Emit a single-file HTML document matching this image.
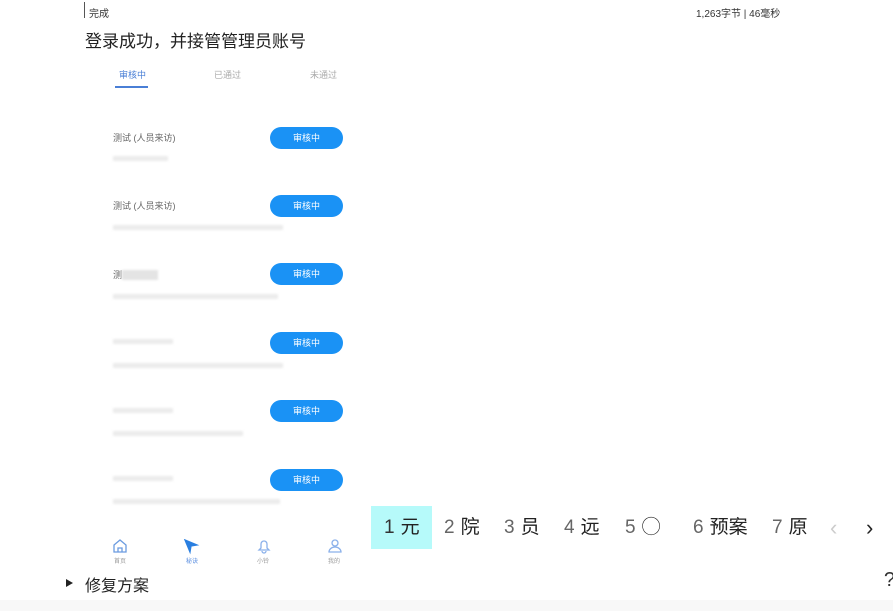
<!DOCTYPE html>
<html><head><meta charset="utf-8"><style>
body{margin:0;width:893px;height:611px;background:#fff;position:relative;overflow:hidden;font-family:"Liberation Sans","Noto Sans CJK SC",sans-serif;color:#333}
.a{position:absolute;white-space:nowrap}
.btn{position:absolute;left:270px;width:73px;height:22px;border-radius:11px;background:#1a92f5;color:#fff;font-size:9px;text-align:center;line-height:22px}
.t{position:absolute;left:113px;font-size:9px;color:#666}
.b{position:absolute;height:5px;background:#ececec;filter:blur(1px)}
.n{position:absolute;top:508px;height:40px;line-height:40px;font-size:19px;color:#222}
.n i{font-style:normal;color:#666;margin-right:6px}
</style></head><body>
<div class="a" style="left:84px;top:2px;width:1px;height:16px;background:#555"></div>
<div class="a" style="left:89px;top:5px;font-size:10px">完成</div>
<div class="a" style="left:696px;top:5px;font-size:10px">1,263字节 | 46毫秒</div>
<div class="a" style="left:85px;top:27px;font-size:17px;color:#222">登录成功，并接管管理员账号</div>
<div class="a" style="left:119px;top:68px;font-size:9px;color:#4a7fd6">审核中</div>
<div class="a" style="left:115px;top:86px;width:33px;height:2px;background:#4a7fd6"></div>
<div class="a" style="left:214px;top:68px;font-size:9px;color:#aaa">已通过</div>
<div class="a" style="left:310px;top:68px;font-size:9px;color:#aaa">未通过</div>

<div class="t" style="top:131px">测试 (人员来访)</div><div class="btn" style="top:127px">审核中</div>
<div class="b" style="left:113px;top:156px;width:55px"></div>
<div class="t" style="top:199px">测试 (人员来访)</div><div class="btn" style="top:195px">审核中</div>
<div class="b" style="left:113px;top:225px;width:170px"></div>
<div class="t" style="top:268px">测<span style="background:#e4e4e4;color:transparent;filter:blur(1px)">试试试试</span></div><div class="btn" style="top:263px">审核中</div>
<div class="b" style="left:113px;top:294px;width:165px"></div>
<div class="b" style="left:113px;top:339px;width:60px"></div><div class="btn" style="top:332px">审核中</div>
<div class="b" style="left:113px;top:363px;width:170px"></div>
<div class="b" style="left:113px;top:408px;width:60px"></div><div class="btn" style="top:400px">审核中</div>
<div class="b" style="left:113px;top:431px;width:130px"></div>
<div class="b" style="left:113px;top:476px;width:60px"></div><div class="btn" style="top:469px">审核中</div>
<div class="b" style="left:113px;top:499px;width:167px"></div>

<svg class="a" style="left:112px;top:539px" width="240" height="26" viewBox="0 0 240 26" fill="none" stroke-width="1.3">
<path d="M2 6 L8 1 L14 6 V13 H2 Z M6 13 V9 H10 V13" stroke="#6a9be0"/>
<path d="M73 1 L85 6 L79 7 L78 13 Z" fill="#2a7fe0" stroke="#2a7fe0"/>
<path d="M147 11 H157 L155 9 V5 A3 3 0 0 0 149 5 V9 Z M150 12 A2 2 0 0 0 154 12" stroke="#8ab0ea"/>
<circle cx="223" cy="4" r="3" stroke="#8ab0ea"/><path d="M217 13 A6 5 0 0 1 229 13 Z" stroke="#8ab0ea"/>
<text x="2" y="24" font-size="6" fill="#999" stroke="none">首页</text>
<text x="74" y="24" font-size="6" fill="#5b8fe0" stroke="none">秘诀</text>
<text x="145" y="24" font-size="6" fill="#999" stroke="none">小铃</text>
<text x="216" y="24" font-size="6" fill="#999" stroke="none">我的</text>
</svg>

<div class="a" style="left:371px;top:506px;width:61px;height:43px;background:#b6fafa"></div>
<div class="n" style="left:384px"><i style="color:#333">1</i>元</div>
<div class="n" style="left:444px"><i>2</i>院</div>
<div class="n" style="left:504px"><i>3</i>员</div>
<div class="n" style="left:564px"><i>4</i>远</div>
<div class="n" style="left:625px"><i>5</i>◯</div>
<div class="n" style="left:693px"><i>6</i>预案</div>
<div class="n" style="left:772px"><i>7</i>原</div>
<div class="n" style="left:830px;color:#ccc;font-size:22px">‹</div>
<div class="n" style="left:866px;font-size:22px">›</div>

<div class="a" style="left:66px;top:579px;width:0;height:0;border-left:7px solid #222;border-top:4px solid transparent;border-bottom:4px solid transparent"></div>
<div class="a" style="left:85px;top:572px;font-size:16px;color:#222">修复方案</div>
<div class="a" style="left:884px;top:569px;font-size:20px;color:#333">?</div>
<div class="a" style="left:0;top:600px;width:893px;height:11px;background:#f8f8f8"></div>
</body></html>
